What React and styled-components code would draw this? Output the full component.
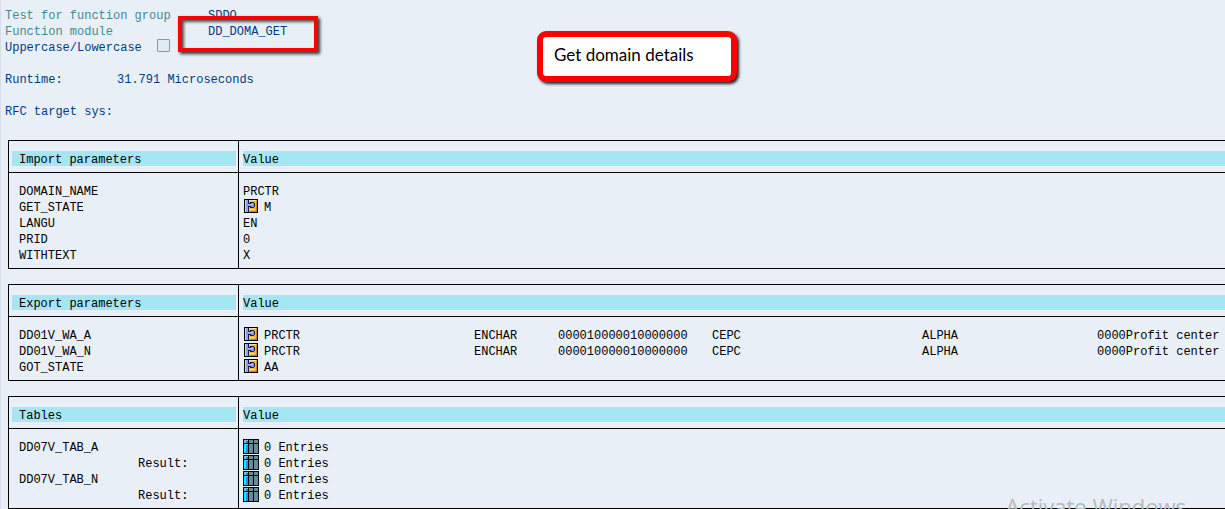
import React from "react";
import styled, { createGlobalStyle } from "styled-components";

const GlobalStyle = createGlobalStyle`
  *, *::before, *::after { box-sizing: border-box; }
  body {
    margin: 0;
    background: #e8eff6;
    overflow: hidden;
  }
`;

const Page = styled.main`
  position: relative;
  min-height: 100vh;
  border-left: 1px solid #d6dcea;
  padding: 8px 0 0 4px;
  overflow: hidden;
  color: #000;
  font: 12px/16px "Liberation Mono", "Courier New", monospace;
  white-space: nowrap;
`;

const Summary = styled.dl`
  margin: 0 0 20px;
  color: #003a85;
`;

const SummaryRow = styled.div`
  display: grid;
  grid-template-columns: ${(p) => p.$columns || "203px auto"};
  height: 16px;
  margin-bottom: ${(p) => (p.$spaced ? "16px" : "0")};
`;

const Term = styled.dt`
  color: ${(p) => (p.$muted ? "#438a92" : "inherit")};
`;

const Detail = styled.dd`
  position: relative;
  margin: 0;
`;

const CheckBox = styled.input`
  display: block;
  appearance: none;
  width: 13px;
  height: 13px;
  margin: -1px 0 0;
  border: 1px solid #8e979e;
  border-radius: 1px;
  background: #dfebf5;

  &:checked {
    background: #003a85;
  }
`;

const Highlight = styled.span`
  position: absolute;
  left: -30px;
  top: -8px;
  width: 140px;
  height: 36px;
  border: 4px solid #f00;
  box-shadow: 2px 2px 3px #333, inset 2px 2px 3px #555;
  pointer-events: none;
`;

const Callout = styled.aside`
  position: absolute;
  left: 536px;
  top: 31px;
  width: 200px;
  padding: 8px 11px 11px;
  border: 6px solid #f00;
  border-radius: 9px;
  background: #fff;
  box-shadow: 2px 2px 3px #222;
  font: 17px/20px Lato, "Open Sans", sans-serif;
`;

const Tables = styled.div`
  display: flex;
  flex-direction: column;
  gap: 15px;
  padding-left: 3px;
`;

const ParameterTable = styled.table`
  width: 100%;
  table-layout: fixed;
  border-spacing: 0;
  border-bottom: 1px solid #000;
`;

const HeadCell = styled.th`
  width: ${(p) => (p.$name ? "230px" : "auto")};
  padding: ${(p) => (p.$name ? "10px 2px 6px 3px" : "10px 0 6px 4px")};
  border: solid #000;
  border-width: 1px 0 1px 1px;
  font-weight: normal;
  text-align: left;
`;

const Band = styled.div`
  height: 15px;
  line-height: 18px;
  padding-left: ${(p) => (p.$name ? "7px" : "0")};
  background: #a6e5f2;
`;

const Body = styled.tbody`
  tr:first-child > * { padding-top: 11px; }
  tr:last-child > * { padding-bottom: 4px; }
`;

const NameCell = styled.th`
  padding: 0 0 0 ${(p) => (p.$indent ? "129px" : "10px")};
  border-left: 1px solid #000;
  font-weight: normal;
  text-align: left;
`;

const ValueCell = styled.td`
  padding: 0 0 0 4px;
  border-left: 1px solid #000;
`;

const ValueLine = styled.div`
  display: grid;
  grid-template-columns: ${(p) => (p.$icon ? "21px " : "")}210px 84px 154px 210px 175px auto;
  height: 16px;
`;

const Icon = styled.svg`
  display: block;
  width: 16px;
  height: 16px;
  margin-top: -1px;
`;

const Watermark = styled.div`
  position: absolute;
  right: 39px;
  bottom: -12px;
  color: #b4babf;
  font: 22px/30px "Open Sans", sans-serif;
  pointer-events: none;
`;

function StructureIcon() {
  return (
    <Icon viewBox="0 0 16 16" shapeRendering="crispEdges" aria-hidden="true">
      <path fill="#000" d="M1 0h14v14H1z" />
      <path fill="#8da8d8" d="M2 1h3v12H2z" />
      <path fill="#c3d3ef" d="M2 1h1v12H2z" />
      <path fill="#f3b544" d="M6 1h8v12H6z" />
      <path fill="#ffe59a" d="M6 1h7v1H6zM6 10h5v1H6z" />
      <path fill="#c98318" d="M13 2h1v11H7v-1h6z" />
      <path fill="#101e48" d="M5 1h1v3h1V3h4v1h1v4h-1v1H7V8H6v5H5z" />
      <path fill="#8199cf" d="M3 5h5V4h3v4H8V7H3z" />
      <path fill="#b4c6ea" d="M5 5h5v1H5z" />
    </Icon>
  );
}

function TableIcon() {
  return (
    <Icon viewBox="0 0 16 16" shapeRendering="crispEdges" aria-hidden="true">
      <path fill="#000" d="M0 0h16v15H0z" />
      <path fill="#6a899a" d="M6 1h4v3H6zM11 1h4v3h-4zM6 5h4v9H6zM11 5h4v9h-4z" />
      <path fill="#80bce6" d="M1 1h4v3H1z" />
      <path fill="#3572b8" d="M3 2h2v2H3z" />
      <path fill="#00efff" d="M1 5h4v1H3v8H1z" />
      <path fill="#238de8" d="M3 6h2v8H3z" />
    </Icon>
  );
}

const icons = { structure: StructureIcon, table: TableIcon };

const domainFields = ["PRCTR", "ENCHAR", "000010000010000000", "CEPC", "ALPHA", "0000Profit center"];

const sections = [
  {
    title: "Import parameters",
    rows: [
      { name: "DOMAIN_NAME", values: ["PRCTR"] },
      { name: "GET_STATE", icon: "structure", values: ["M"] },
      { name: "LANGU", values: ["EN"] },
      { name: "PRID", values: ["0"] },
      { name: "WITHTEXT", values: ["X"] },
    ],
  },
  {
    title: "Export parameters",
    rows: [
      { name: "DD01V_WA_A", icon: "structure", values: domainFields },
      { name: "DD01V_WA_N", icon: "structure", values: domainFields },
      { name: "GOT_STATE", icon: "structure", values: ["AA"] },
    ],
  },
  {
    title: "Tables",
    rows: [
      { name: "DD07V_TAB_A", icon: "table", values: ["0 Entries"] },
      { name: "Result:", indent: true, icon: "table", values: ["0 Entries"] },
      { name: "DD07V_TAB_N", icon: "table", values: ["0 Entries"] },
      { name: "Result:", indent: true, icon: "table", values: ["0 Entries"] },
    ],
  },
];

function Section({ title, rows }) {
  return (
    <ParameterTable>
      <thead>
        <tr>
          <HeadCell scope="col" $name><Band $name>{title}</Band></HeadCell>
          <HeadCell scope="col"><Band>Value</Band></HeadCell>
        </tr>
      </thead>
      <Body>
        {rows.map((row, index) => {
          const Glyph = icons[row.icon];
          return (
            <tr key={index}>
              <NameCell scope="row" $indent={row.indent}>{row.name}</NameCell>
              <ValueCell>
                <ValueLine $icon={Boolean(Glyph)}>
                  {Glyph && <Glyph />}
                  {row.values.map((value) => <span key={value}>{value}</span>)}
                </ValueLine>
              </ValueCell>
            </tr>
          );
        })}
      </Body>
    </ParameterTable>
  );
}

export default function App() {
  return (
    <>
      <GlobalStyle />
      <Page>
        <Summary>
          <SummaryRow>
            <Term $muted>Test for function group</Term>
            <Detail>SDDO</Detail>
          </SummaryRow>
          <SummaryRow>
            <Term $muted>Function module</Term>
            <Detail>DD_DOMA_GET<Highlight /></Detail>
          </SummaryRow>
          <SummaryRow $columns="152px auto" $spaced>
            <Term><label htmlFor="case">Uppercase/Lowercase</label></Term>
            <Detail><CheckBox id="case" type="checkbox" /></Detail>
          </SummaryRow>
          <SummaryRow $columns="112px auto" $spaced>
            <Term>Runtime:</Term>
            <Detail>31.791 Microseconds</Detail>
          </SummaryRow>
          <SummaryRow>
            <Term>RFC target sys:</Term>
          </SummaryRow>
        </Summary>
        <Tables>
          {sections.map((section) => <Section key={section.title} {...section} />)}
        </Tables>
        <Callout>Get domain details</Callout>
        <Watermark>Activate Windows</Watermark>
      </Page>
    </>
  );
}
